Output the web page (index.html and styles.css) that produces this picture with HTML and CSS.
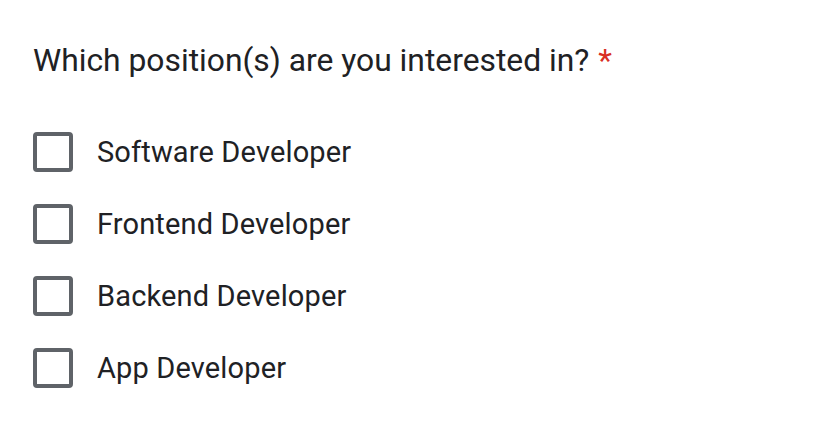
FILE: index.html
```html
<!DOCTYPE html>
<html>
<head>
<meta charset="utf-8">
<link rel="stylesheet" href="styles.css">
</head>
<body>
<div class="question">
  <div class="title">Which position(s) are you interested in?<span class="req">*</span></div>
  <div class="options">
    <label class="option"><span class="box"></span><span class="label">Software Developer</span></label>
    <label class="option"><span class="box"></span><span class="label">Frontend Developer</span></label>
    <label class="option"><span class="box"></span><span class="label">Backend Developer</span></label>
    <label class="option"><span class="box"></span><span class="label">App Developer</span></label>
  </div>
</div>
</body>
</html>
```
FILE: styles.css
```css
html, body {
  margin: 0;
  padding: 0;
  background: #ffffff;
}
body {
  font-family: Roboto, "Liberation Sans", sans-serif;
  color: #202124;
}
.question {
  padding: 40px 0 0 33px;
}
.title {
  font-size: 31.8px;
  line-height: 40px;
  letter-spacing: 0;
}
.req {
  color: #d93025;
  margin-left: 9px;
}
.options {
  display: flex;
  flex-direction: column;
  gap: 32px;
  margin-top: 52px;
}
.option {
  display: flex;
  align-items: center;
  height: 40px;
}
.box {
  box-sizing: border-box;
  width: 40px;
  height: 40px;
  border: 4px solid #5f6368;
  border-radius: 4px;
  flex: none;
}
.label {
  font-size: 29px;
  margin-left: 24px;
  letter-spacing: 0.15px;
}
```
